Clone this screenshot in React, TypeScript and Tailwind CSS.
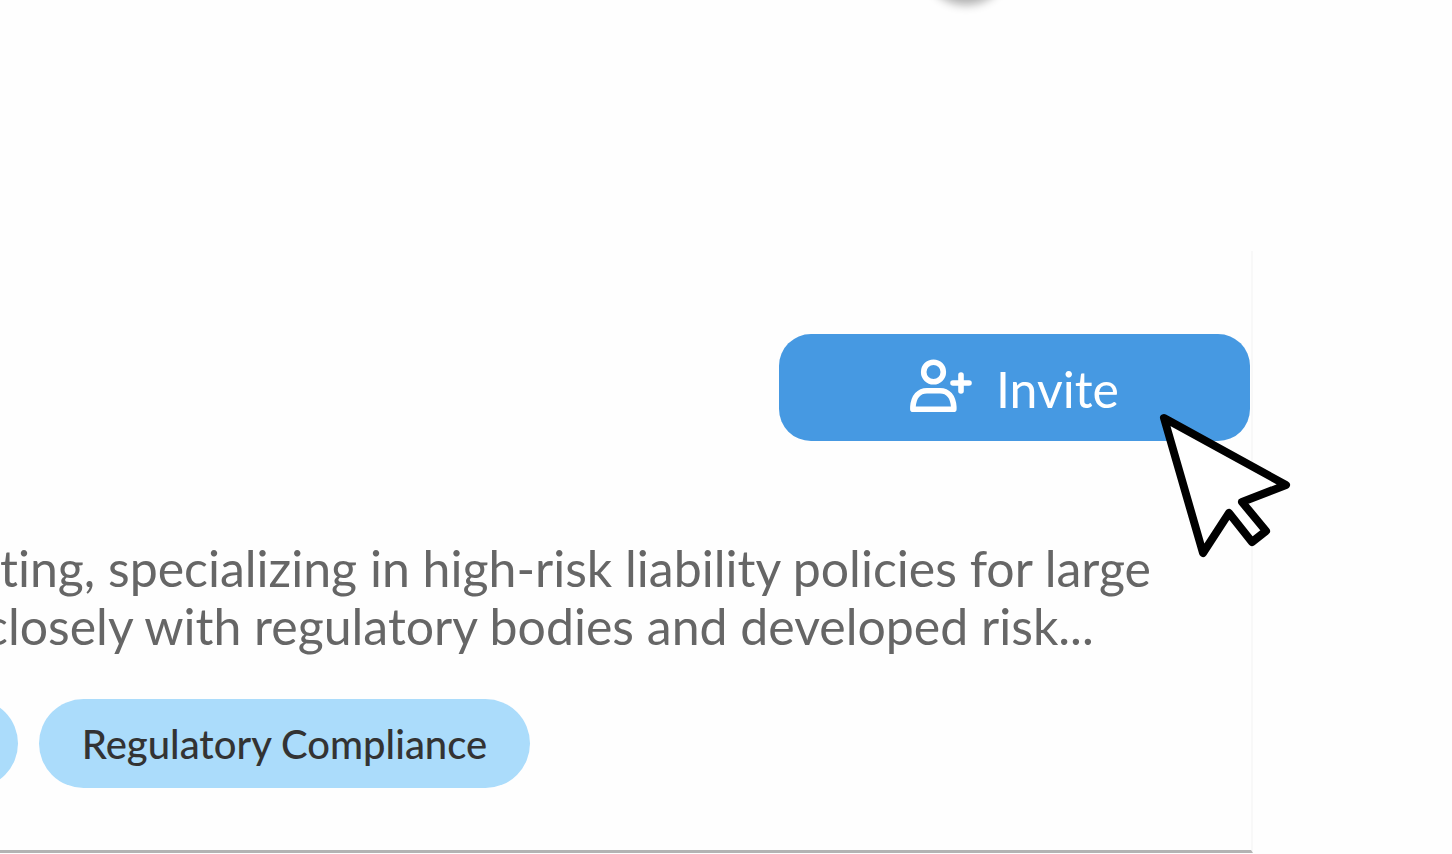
const tags = ["Regulatory Compliance"];

function InviteIcon() {
  return (
    <svg
      aria-hidden="true"
      className="mb-2 h-[54px] w-[62px] shrink-0"
      viewBox="0 0 62 54"
      fill="none"
      stroke="currentColor"
      strokeWidth="5.6"
      strokeLinecap="round"
      strokeLinejoin="round"
    >
      <circle cx="23.5" cy="13" r="9.8" />
      <path d="M2.9 50.3H43.8V48C43 37.5 38 31.7 30 31.7H17C9 31.7 3.7 37.5 2.9 48Z" />
      <path d="M51 16V32M43 24H59" />
    </svg>
  );
}

function Cursor() {
  return (
    <svg
      aria-hidden="true"
      className="pointer-events-none absolute -right-10 top-[77px] h-[148px] w-[136px]"
      viewBox="0 0 136 148"
      fill="#fff"
      stroke="#000"
      strokeWidth="8"
      strokeLinejoin="round"
    >
      <path d="M9 7L131 74L87 91L111 120L97 131L74 102L48 142Z" />
    </svg>
  );
}

export default function App() {
  return (
    <main className="flex min-h-screen flex-col overflow-hidden bg-[#fefefe] font-['Lato','Liberation_Sans',sans-serif] [font-variant-ligatures:none]">
      <div className="flex h-[251px] shrink-0 justify-end pr-[446px]">
        <div className="-mt-20 size-20 rounded-full bg-[#b8b8b8] shadow-[0_2px_10px_3px_#b0b0b0]" />
      </div>
      <article className="mr-[199px] border-r-2 border-b-3 border-r-[#f8f8f8] border-b-[#b3b3b3] pt-[83px] pb-[62px]">
        <div className="relative flex justify-end pr-px">
          <button
            type="button"
            className="flex h-[107px] w-[471px] items-center justify-center gap-6 rounded-[32px] bg-[#4699e2] pt-1 text-[50px] text-white"
          >
            <InviteIcon />
            Invite
          </button>
          <Cursor />
        </div>
        <p className="-ml-4 mt-[98px] indent-4 text-[50px] leading-[58px] whitespace-nowrap text-[#666]">
          ting, specializing in high-risk liability policies for large
          <br />
          closely with regulatory bodies and developed risk...
        </p>
        <ul className="-ml-8 mt-11 flex gap-[21px]">
          <li aria-hidden="true" className="h-[89px] w-[50px] rounded-r-full bg-[#abdcfb]" />
          {tags.map((tag) => (
            <li
              key={tag}
              className="flex h-[89px] w-[491px] items-center justify-center rounded-full bg-[#abdcfb] text-[40px] font-medium text-[#333]"
            >
              {tag}
            </li>
          ))}
        </ul>
      </article>
    </main>
  );
}
